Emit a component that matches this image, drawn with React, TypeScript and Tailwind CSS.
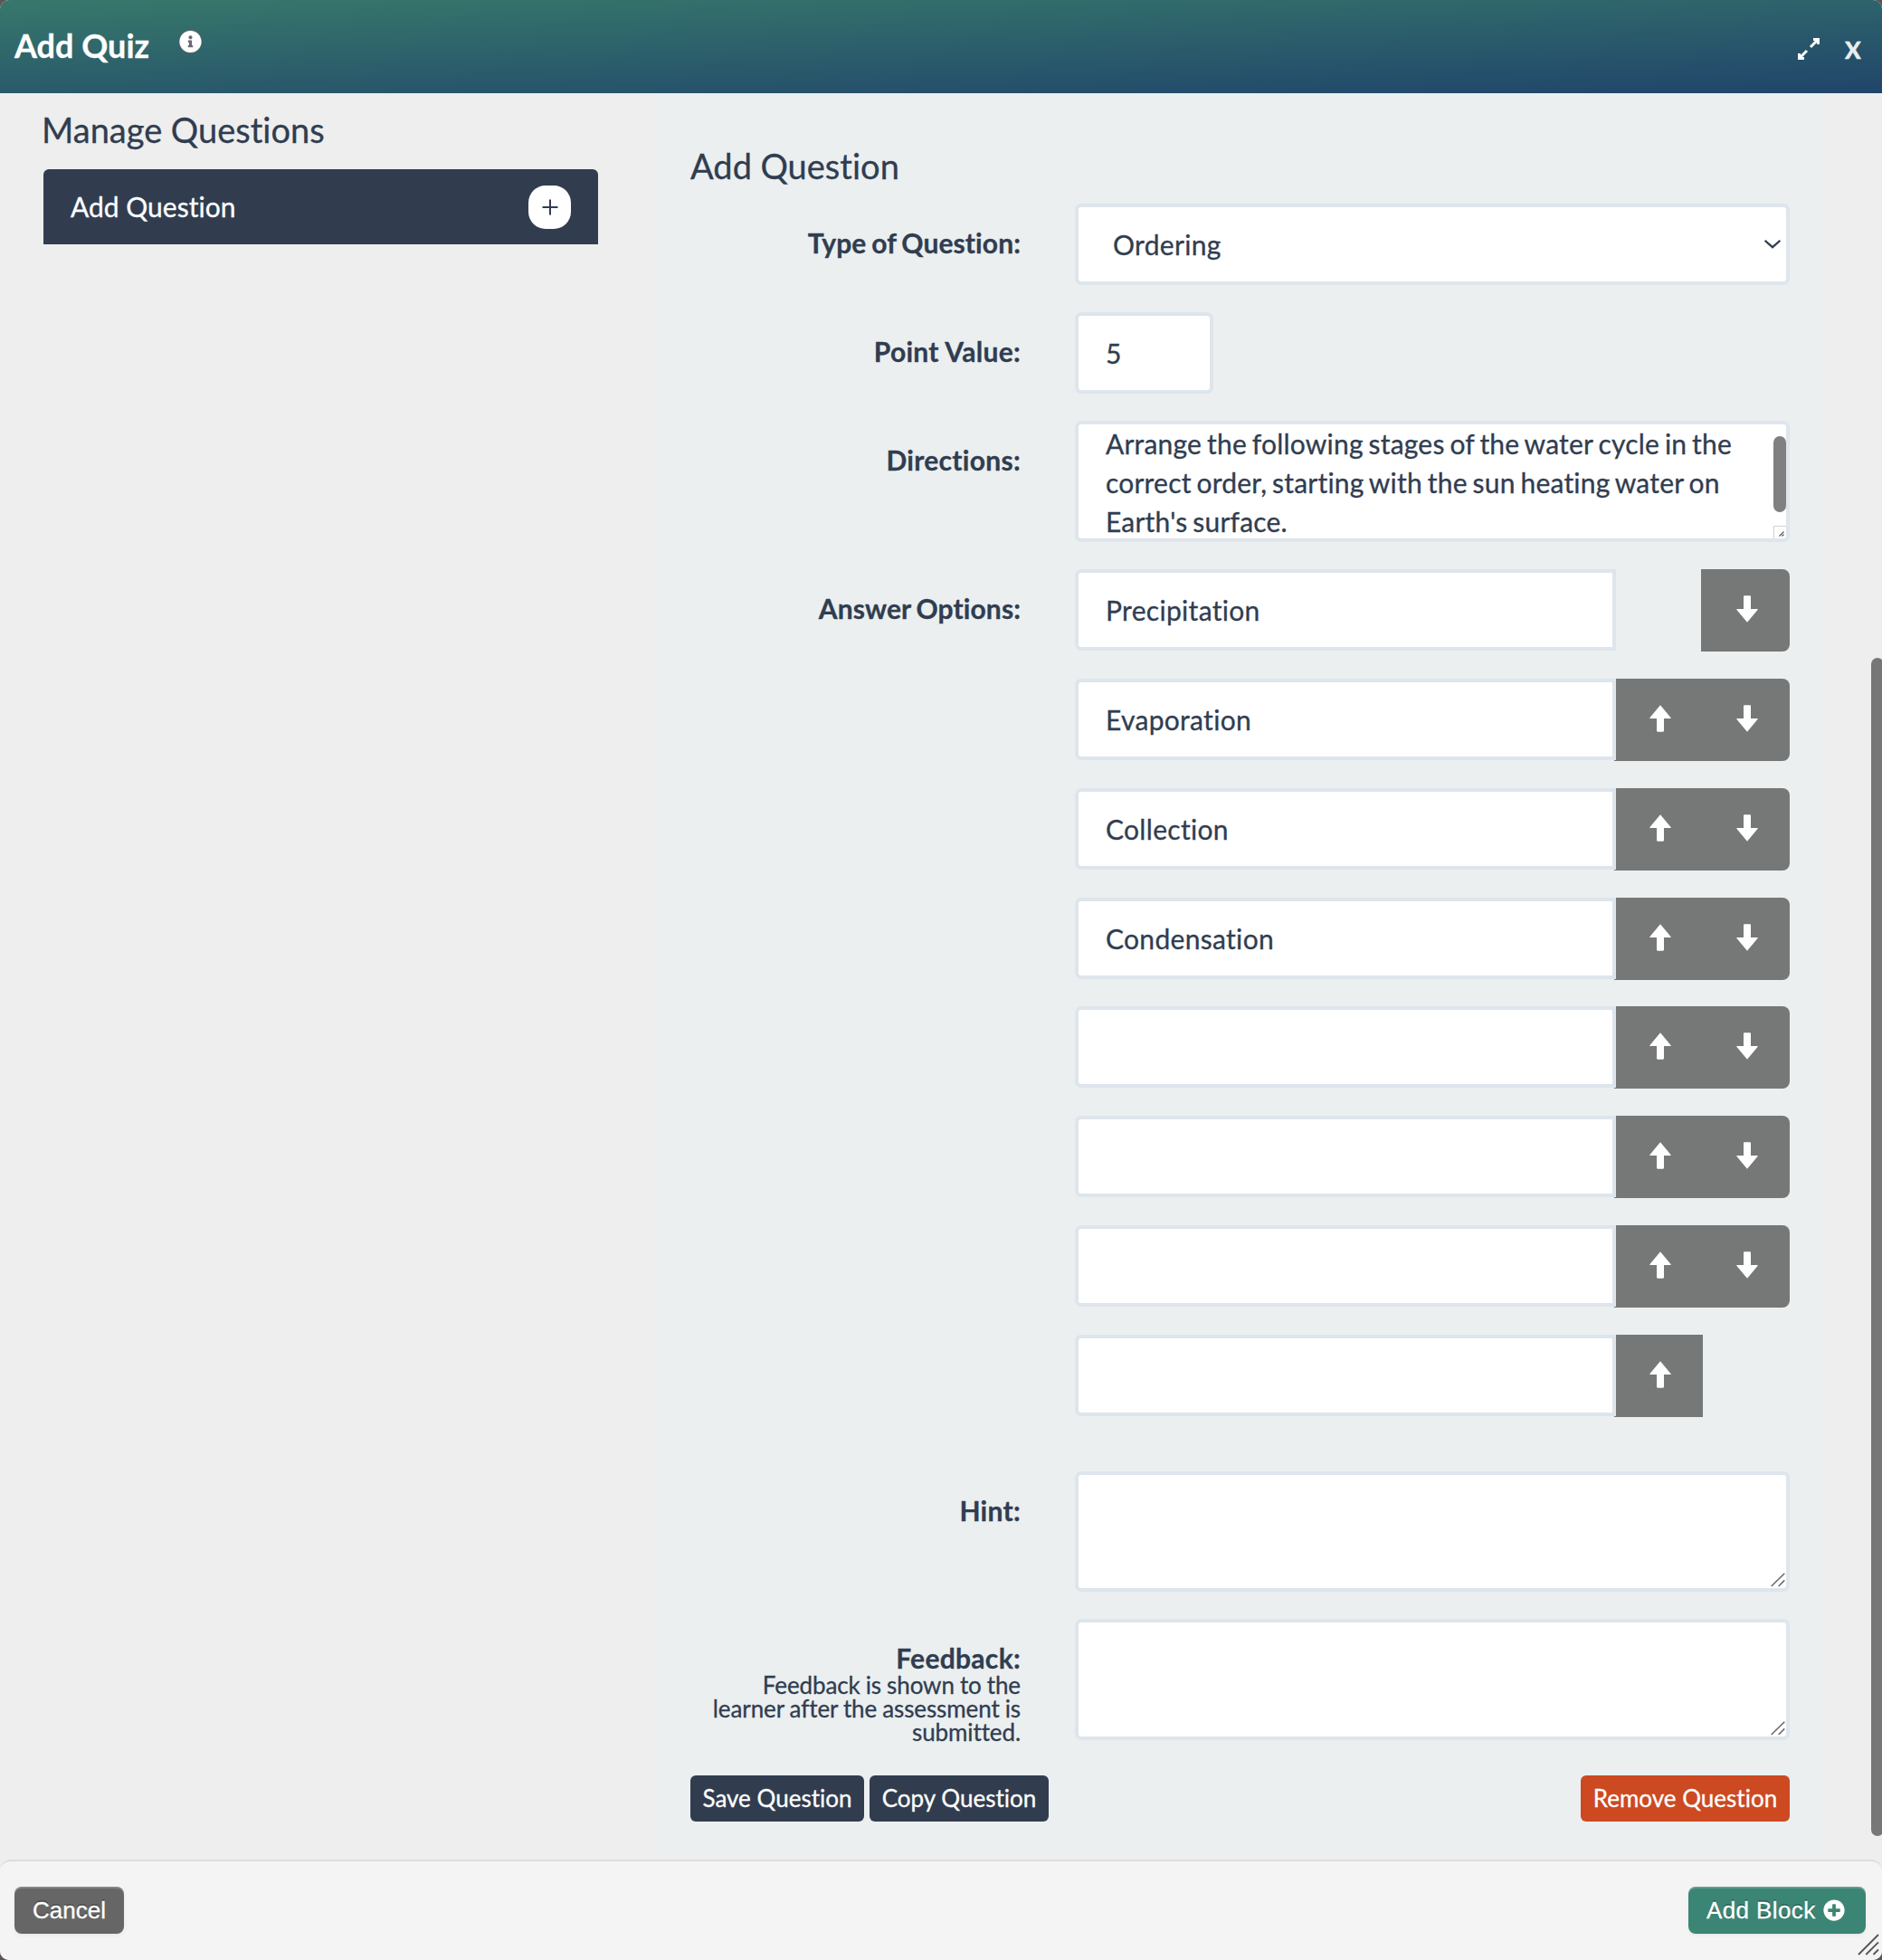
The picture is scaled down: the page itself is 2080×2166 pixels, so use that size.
import React from "react";
import { FaInfoCircle, FaPlusCircle } from "react-icons/fa";

const body = "text-[30px] tracking-[0.31px] [word-spacing:-2.6px]";
const heading = "text-[38px] leading-[46px] tracking-[0.02px] [word-spacing:-0.3px]";
const field = "border-4 border-[#dee5ec] bg-white";

function Arrow({ down = false }: { down?: boolean }) {
  return (
    <svg viewBox="0 0 24 30" className={down ? "h-[30px] w-[24px] rotate-180" : "h-[30px] w-[24px]"} fill="#fff">
      <path d="M12 0.3 L23.7 14.2 Q24 14.9 23.2 14.9 H16 V28.6 Q16 29.7 15 29.7 H9 Q8 29.7 8 28.6 V14.9 H0.8 Q0 14.9 0.3 14.2 Z" />
    </svg>
  );
}

function Grip() {
  return (
    <svg viewBox="0 0 16 16" className="absolute right-px bottom-px h-4 w-4" stroke="#666" strokeWidth="1.5" fill="none">
      <path d="M0.7 15 L15.3 0.7 M8.7 15 L15.3 8.4" />
    </svg>
  );
}

function Row({ label, note, tight = false, children }: { label?: string; note?: string; tight?: boolean; children: React.ReactNode }) {
  return (
    <div className="flex gap-[60px]">
      <div className="w-[365px] shrink-0 pt-[25px] text-right">
        {label && (
          <div
            className={
              tight
                ? "text-[30px] leading-[36px] font-bold tracking-[0.1px] [word-spacing:-1.6px]"
                : "text-[30px] leading-[36px] font-bold tracking-[0.3px]"
            }
          >
            {label}
          </div>
        )}
        {note && (
          <div className="-mt-px ml-auto w-[345px] text-[26px] leading-[26px] tracking-[-0.1px] [word-spacing:-0.5px]">{note}</div>
        )}
      </div>
      {children}
    </div>
  );
}

const options = ["Precipitation", "Evaporation", "Collection", "Condensation", "", "", "", ""];

function Option({ text, first, last }: { text: string; first: boolean; last: boolean }) {
  return (
    <div className="flex h-[120.85px] items-start">
      <div className={`${field} ${body} relative z-10 h-[90px] w-[598px] rounded-l-[7px] pl-[30px] leading-[82px]`}>{text}</div>
      {first ? (
        <div className="w-[96px]" />
      ) : (
        <button className="-ml-[2px] flex h-[91px] w-[98px] items-center justify-center bg-[#767877] pb-[3px] pl-[3px]">
          <Arrow />
        </button>
      )}
      {!last && (
        <button className="-ml-[2px] flex h-[91px] w-[98px] items-center justify-center rounded-r-[8px] bg-[#767877] pb-[3px] pl-[3px]">
          <Arrow down />
        </button>
      )}
    </div>
  );
}

export default function App() {
  return (
    <div className="h-[2166px] w-[2080px] overflow-hidden bg-[#5b5656] font-['Lato',sans-serif] text-[#303d50] [-webkit-text-stroke:0.3px]">
      <div className="flex h-full flex-col overflow-hidden rounded-[10px] bg-[#eeeeee]">
        <header className="flex h-[103px] shrink-0 items-start bg-linear-[178deg] from-[#37786b] to-[#20456b] pr-[24px] pl-[16px] text-white">
          <h1 className="mt-[29px] w-[182px] text-[36px] leading-[43px] font-bold">Add Quiz</h1>
          <span className="mt-[33px] rounded-full bg-[#6b6670]">
            <FaInfoCircle className="h-[26px] w-[25px]" />
          </span>
          <svg viewBox="0 0 24 24" className="mt-[42px] ml-auto h-6 w-6" stroke="#fff" strokeWidth="3" fill="none">
            <path d="M17 1.5 H22.5 V7 M22 2 L14 10 M7 22.5 H1.5 V17 M2 22 L10 14" />
          </svg>
          <span className="mt-[40px] ml-[28px] w-[17px] text-[26px] leading-[31px] font-black text-white/90">X</span>
        </header>

        <div className="flex h-[1952px] shrink-0">
          <aside className="w-[724px] shrink-0 px-[47px] pt-[17px]">
            <h2 className={`${heading} -ml-px`}>Manage Questions</h2>
            <div className="mt-[21px] ml-px flex h-[83px] w-[613px] items-center justify-between rounded-t-[6px] bg-[#313d4f] px-[30px] text-white">
              <span className="text-[30px] tracking-[0.01px]">Add Question</span>
              <span className="mt-px flex h-[48px] w-[47px] items-center justify-center rounded-[19px] bg-white">
                <svg viewBox="0 0 18 18" className="h-[18px] w-[18px]" stroke="#303d50" strokeWidth="2">
                  <path d="M9 0.5 V17.5 M0.5 9 H17.5" />
                </svg>
              </span>
            </div>
          </aside>

          <main className="h-[1950px] w-[1294px] shrink-0 rounded-br-[8px] bg-[#ebeff0] pt-[57px] pr-[40px] pl-[39px]">
            <h2 className={heading}>Add Question</h2>
            <div className="mt-[19px] flex flex-col gap-[30px]">
              <Row label="Type of Question:" tight>
                <div className={`${field} ${body} relative h-[90px] w-[790px] rounded-[7px] pl-[38px] leading-[82px]`}>
                  Ordering
                  <svg viewBox="0 0 18 12" className="absolute top-[35px] right-[6px] h-3 w-[18px]" stroke="#303d50" strokeWidth="2.2" fill="none">
                    <path d="M0.6 1.8 L9 9.2 L17.4 1.8" />
                  </svg>
                </div>
              </Row>
              <Row label="Point Value:">
                <div className={`${field} ${body} h-[90px] w-[153px] rounded-[7px] pl-[30px] leading-[82px]`}>5</div>
              </Row>
              <Row label="Directions:">
                <div className={`${field} ${body} relative h-[134px] w-[790px] overflow-hidden rounded-[7px] pl-[30px] leading-[43px]`}>
                  <p className="w-[710px] tracking-[0.2px] [word-spacing:-2px]">
                    Arrange the following stages of the water cycle in the correct order, starting with the sun heating water on Earth's surface.
                  </p>
                  <div className="absolute top-[13px] right-0 h-[84px] w-[14px] rounded-full bg-[#808080]" />
                  <div className="absolute right-0 bottom-0 h-[14px] w-[14px] border-t border-l border-[#d2d2d2] bg-white">
                    <svg viewBox="0 0 6 6" className="absolute right-[2px] bottom-[2px] h-[6px] w-[6px]" stroke="#555" strokeWidth="1.2">
                      <path d="M0.5 5.5 L5.5 0.5 M3.5 5.5 L5.5 3.5" />
                    </svg>
                  </div>
                </div>
              </Row>
              <Row label="Answer Options:" tight>
                <div className="w-[790px]">
                  {options.map((text, i) => (
                    <Option key={i} text={text} first={i === 0} last={i === options.length - 1} />
                  ))}
                </div>
              </Row>
              <Row label="Hint:">
                <div className={`${field} relative h-[133px] w-[790px] rounded-[7px]`}>
                  <Grip />
                </div>
              </Row>
              <Row label="Feedback:" note="Feedback is shown to the learner after the assessment is submitted.">
                <div className={`${field} relative h-[134px] w-[790px] rounded-[7px]`}>
                  <Grip />
                </div>
              </Row>
            </div>
            <div className="mt-[35px] flex gap-[6px] text-[26px] leading-[51px] tracking-[0.01px] text-white">
              <button className="h-[51px] w-[192px] rounded-[6px] bg-[#313d4f]">Save Question</button>
              <button className="h-[51px] w-[198px] rounded-[6px] bg-[#313d4f]">Copy Question</button>
              <button className="ml-auto h-[51px] w-[231px] rounded-[6px] bg-[#cd4921]">Remove Question</button>
            </div>
          </main>

          <div className="mt-[624px] ml-[50px] h-[1302px] w-[14px] shrink-0 rounded-full bg-[#777777]" />
        </div>

        <footer className="relative flex h-[111px] shrink-0 items-start justify-between rounded-t-[12px] border-t-2 border-[#dddddd] bg-[#f4f4f4] px-[16px] pt-[28px] font-['Liberation_Sans',sans-serif] text-[26px] leading-[52px] text-white">
          <button className="h-[52px] w-[121px] rounded-[8px] bg-[#666666] shadow-[inset_0_2px_0_rgba(255,255,255,0.2),0_2px_4px_rgba(0,0,0,0.05)] [text-shadow:0_-2px_0_rgba(0,0,0,0.25)]">
            Cancel
          </button>
          <button className="mr-[2px] flex h-[52px] w-[196px] items-center rounded-[8px] bg-[#3b8575] pl-[20px] tracking-[0.4px] shadow-[inset_0_2px_0_rgba(255,255,255,0.2),0_2px_4px_rgba(0,0,0,0.05)] [text-shadow:0_-2px_0_rgba(0,0,0,0.25)]">
            Add Block
            <FaPlusCircle className="ml-[8px] h-6 w-6" />
          </button>
          <svg viewBox="0 0 24 24" className="absolute right-[3px] bottom-[5px] h-6 w-6" stroke="#555" strokeWidth="1.8">
            <path d="M1 23 L23 1 M9.3 23 L23 9.3 M17.5 23 L23 17.5" />
          </svg>
        </footer>
      </div>
    </div>
  );
}
